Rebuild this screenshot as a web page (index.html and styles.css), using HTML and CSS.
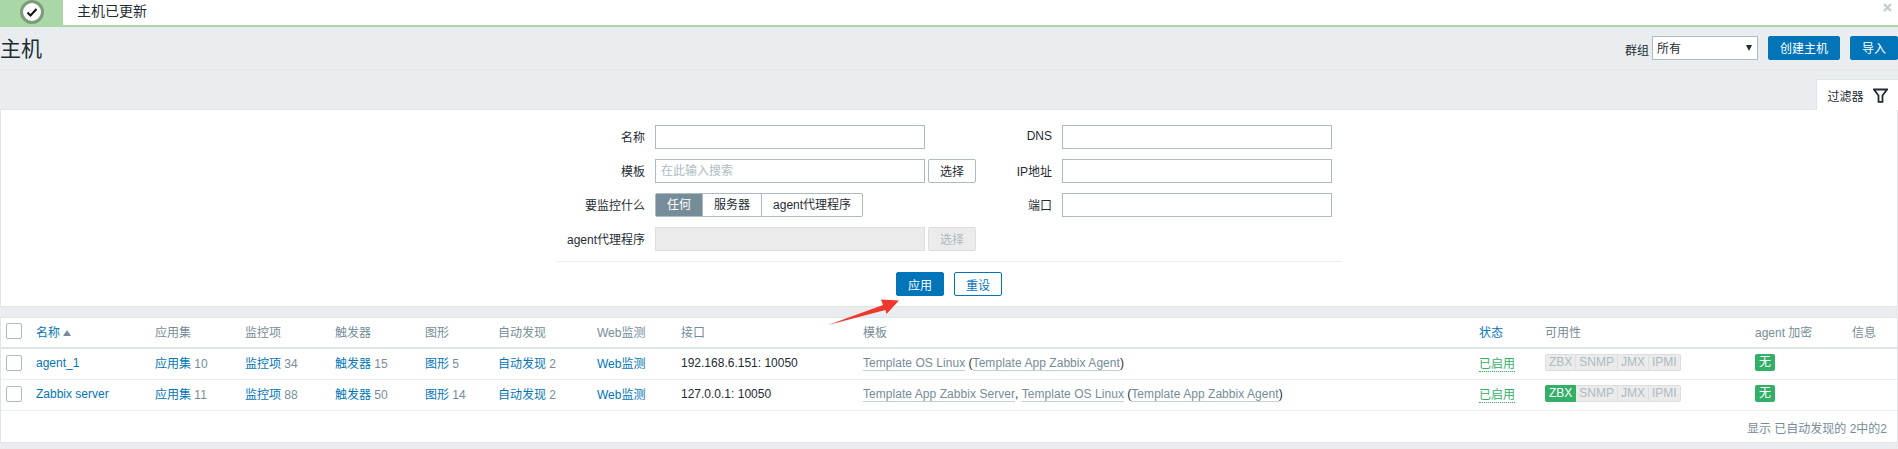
FILE: index.html
```html
<!DOCTYPE html>
<html>
<head>
    <title>主机</title>
    <link rel="stylesheet" href="styles.css">
</head>
<body>
    <div class="msg-good">
        <div class="msg-icon">
            <svg width="26" height="26" viewBox="0 0 26 26">
                <circle cx="13" cy="12" r="10.5" fill="#fff" stroke="#7c9a7c" stroke-width="3"/>
                <path d="M8.5 12.5l3 3 6-6.500" fill="none" stroke="#111" stroke-width="2"/>
            </svg>
        </div>
        <div class="msg-text">主机已更新</div>
        <svg class="msg-close" width="9" height="9" viewBox="0 0 9 9">
            <path d="M1 1l7 7M8 1l-7 7" stroke="#c3ccd1" stroke-width="2.4"/>
        </svg>
    </div>

    <div class="header">
        <h1>主机</h1>
        <div class="controls">
            <label class="group-label">群组</label>
            <div class="fake-select">所有<span class="select-arrow"></span></div>
            <button class="btn btn-create">创建主机</button>
            <button class="btn btn-import">导入</button>
        </div>
    </div>

    <div class="filter-tabs">
        <div class="filter-tab">
            过滤器
            <svg width="15" height="15" viewBox="0 0 15 15">
                <path d="M1 1.5h13L9.500 7.500v6.300H5.500V7.500z" fill="none" stroke="#1f2c33" stroke-width="1.800"/>
            </svg>
        </div>
    </div>

    <div class="filter-panel">
        <div class="filter-form">
            <div class="filter-col">
                <div class="form-row">
                    <label>名称</label>
                    <input class="text-input" type="text">
                </div>
                <div class="form-row">
                    <label>模板</label>
                    <input class="text-input" type="text" placeholder="在此输入搜索">
                    <button class="btn-select">选择</button>
                </div>
                <div class="form-row">
                    <label>要监控什么</label>
                    <div class="radio-group">
                        <span class="radio radio-on">任何</span>
                        <span class="radio">服务器</span>
                        <span class="radio">agent代理程序</span>
                    </div>
                </div>
                <div class="form-row">
                    <label>agent代理程序</label>
                    <input class="text-input" type="text" disabled>
                    <button class="btn-select" disabled>选择</button>
                </div>
            </div>
            <div class="filter-col filter-col-right">
                <div class="form-row">
                    <label>DNS</label>
                    <input class="text-input" type="text">
                </div>
                <div class="form-row">
                    <label>IP地址</label>
                    <input class="text-input" type="text">
                </div>
                <div class="form-row">
                    <label>端口</label>
                    <input class="text-input" type="text">
                </div>
            </div>
        </div>
        <div class="filter-actions">
            <button class="btn btn-apply">应用</button>
            <button class="btn btn-alt">重设</button>
        </div>
    </div>

    <div class="list-panel">
        <table class="list-table">
            <colgroup>
                <col class="c-check"><col class="c-name"><col class="c-apps"><col class="c-items"><col class="c-trig">
                <col class="c-graph"><col class="c-disc"><col class="c-web"><col class="c-iface"><col class="c-tmpl">
                <col class="c-status"><col class="c-avail"><col class="c-enc"><col class="c-info">
            </colgroup>
            <thead>
                <tr>
                    <th><span class="checkbox"></span></th>
                    <th><a href="#">名称</a><span class="sort-up"></span></th>
                    <th>应用集</th>
                    <th>监控项</th>
                    <th>触发器</th>
                    <th>图形</th>
                    <th>自动发现</th>
                    <th>Web监测</th>
                    <th>接口</th>
                    <th>模板</th>
                    <th><a href="#">状态</a></th>
                    <th>可用性</th>
                    <th>agent 加密</th>
                    <th>信息</th>
                </tr>
            </thead>
            <tbody>
                <tr>
                    <td><span class="checkbox"></span></td>
                    <td><a href="#">agent_1</a></td>
                    <td><a href="#">应用集</a> <span class="count">10</span></td>
                    <td><a href="#">监控项</a> <span class="count">34</span></td>
                    <td><a href="#">触发器</a> <span class="count">15</span></td>
                    <td><a href="#">图形</a> <span class="count">5</span></td>
                    <td><a href="#">自动发现</a> <span class="count">2</span></td>
                    <td><a href="#">Web监测</a></td>
                    <td>192.168.6.151: 10050</td>
                    <td><a class="tmpl" href="#">Template OS Linux</a> (<a class="tmpl" href="#">Template App Zabbix Agent</a>)</td>
                    <td><a class="enabled" href="#">已启用</a></td>
                    <td>
                        <div class="avail">
                            <span>ZBX</span><span>SNMP</span><span>JMX</span><span>IPMI</span>
                        </div>
                    </td>
                    <td><span class="enc">无</span></td>
                    <td></td>
                </tr>
                <tr>
                    <td><span class="checkbox"></span></td>
                    <td><a href="#">Zabbix server</a></td>
                    <td><a href="#">应用集</a> <span class="count">11</span></td>
                    <td><a href="#">监控项</a> <span class="count">88</span></td>
                    <td><a href="#">触发器</a> <span class="count">50</span></td>
                    <td><a href="#">图形</a> <span class="count">14</span></td>
                    <td><a href="#">自动发现</a> <span class="count">2</span></td>
                    <td><a href="#">Web监测</a></td>
                    <td>127.0.0.1: 10050</td>
                    <td><a class="tmpl" href="#">Template App Zabbix Server</a>, <a class="tmpl" href="#">Template OS Linux</a> (<a class="tmpl" href="#">Template App Zabbix Agent</a>)</td>
                    <td><a class="enabled" href="#">已启用</a></td>
                    <td>
                        <div class="avail">
                            <span class="avail-on">ZBX</span><span>SNMP</span><span>JMX</span><span>IPMI</span>
                        </div>
                    </td>
                    <td><span class="enc">无</span></td>
                    <td></td>
                </tr>
            </tbody>
        </table>
        <div class="list-footer">显示 已自动发现的 2中的2</div>
    </div>

    <svg class="red-arrow" width="80" height="32" viewBox="0 0 80 32">
        <path d="M1 28L56 8L54 2.500L72 3.500L59.500 17L58.500 13z" fill="#f0372b"/>
    </svg>
</body>
</html>
```

FILE: styles.css
```css
* { box-sizing: border-box; }
html, body { margin: 0; padding: 0; }
body { position: relative; height: 449px; overflow: hidden; background-color: #e9edf0; color: #1f2c33; font-family: "Liberation Sans", "Noto Sans CJK SC", sans-serif; font-size: 12px; }
a { color: #0275b8; text-decoration: none; }
button { font-family: inherit; font-size: 12px; }

.msg-good { position: relative; display: flex; height: 27px; background-color: #fff; border-bottom: 2px solid #a9d7a5; }
.msg-icon { display: flex; justify-content: center; width: 63px; background-color: #a9d7a5; }
.msg-text { padding-left: 14px; line-height: 23px; font-size: 14px; }
.msg-close { position: absolute; top: 3px; right: 6px; }

.header { display: flex; justify-content: space-between; align-items: center; height: 43px; padding-bottom: 1px; border-bottom: 1px solid #dfe4e7; }
.header h1 { margin: 2px 0 0; font-size: 21px; font-weight: normal; line-height: 24px; }
.controls { display: flex; align-items: center; }
.group-label { margin-top: 3px; margin-right: 3px; }
.fake-select { position: relative; width: 106px; height: 24px; margin-right: 10px; padding-left: 4px; line-height: 24px; background-color: #fff; border: 1px solid #acbbc2; }
.select-arrow { position: absolute; top: 8px; right: 5px; border-left: 3px solid transparent; border-right: 3px solid transparent; border-top: 6px solid #1f2c33; }

.btn { height: 24px; padding: 0; border: 1px solid #0275b8; border-radius: 2px; background-color: #0275b8; color: #fff; }
.btn-create { width: 72px; margin-right: 10px; }
.btn-import { width: 48px; }
.btn-apply { width: 48px; }
.btn-alt { width: 48px; background-color: #fff; color: #0275b8; }

.filter-tabs { display: flex; justify-content: flex-end; height: 39px; padding-top: 9px; }
.filter-tab { display: flex; justify-content: center; align-items: center; gap: 9px; width: 82px; height: 31px; background-color: #fff; border-top: 1px solid #dfe4e7; border-left: 1px solid #dfe4e7; position: relative; z-index: 1; }

.filter-panel { height: 198px; padding-top: 15px; background-color: #fff; border: 1px solid #dfe4e7; }
.filter-form { display: flex; width: 786px; margin-left: 555px; height: 137px; border-bottom: 1px solid #ebeef0; }
.filter-col { width: 420px; }
.filter-col-right { width: 366px; }
.form-row { display: flex; align-items: center; height: 24px; margin-bottom: 10px; }
.form-row label { flex: none; width: 89px; margin-right: 10px; padding-bottom: 2px; text-align: right; }
.filter-col-right .form-row label { width: 76px; }
.text-input { width: 270px; height: 24px; padding: 0 5px; border: 1px solid #acbbc2; background-color: #fff; font-family: inherit; font-size: 12px; }
.text-input::placeholder { color: #acbbc2; }
.text-input:disabled { background-color: #ebebeb; border-color: #dcdfe0; }
.btn-select { width: 48px; height: 24px; margin-left: 3px; padding: 0 0 2px; border: 1px solid #acbbc2; border-radius: 2px; background-color: #fff; color: #1f2c33; }
.btn-select:disabled { background-color: #ebebeb; border-color: #dcdfe0; color: #acbbc2; }

.radio-group { display: flex; height: 24px; border: 1px solid #acbbc2; border-radius: 2px; }
.radio { padding: 0 11px; line-height: 22px; border-left: 1px solid #acbbc2; }
.radio:first-child { border-left: 0; }
.radio-on { background-color: #768d99; color: #fff; }

.filter-actions { display: flex; justify-content: center; gap: 10px; padding-top: 10px; }

.list-panel { height: 126px; margin-top: 10px; background-color: #fff; border: 1px solid #dfe4e7; }
.list-table { width: 100%; table-layout: fixed; border-collapse: collapse; }
.list-table th { height: 30px; padding: 0 0 3px 5px; text-align: left; font-weight: normal; color: #768d99; border-bottom: 2px solid #dfe4e7; }
.list-table td { height: 31px; padding: 0 0 2px 5px; border-bottom: 1px solid #ebeef0; }
.c-check { width: 30px; }
.c-name { width: 119px; }
.c-apps { width: 90px; }
.c-items { width: 90px; }
.c-trig { width: 90px; }
.c-graph { width: 73px; }
.c-disc { width: 99px; }
.c-web { width: 84px; }
.c-iface { width: 182px; }
.c-tmpl { width: 616px; }
.c-status { width: 66px; }
.c-avail { width: 210px; }
.c-enc { width: 97px; }

.checkbox { display: block; width: 16px; height: 16px; border: 1px solid #acbbc2; border-radius: 2px; background-color: #fff; }
.sort-up { display: inline-block; margin-left: 3px; vertical-align: 1px; border-left: 4px solid transparent; border-right: 4px solid transparent; border-bottom: 6px solid #768d99; }
.count { color: #768d99; }
.tmpl { color: #768d99; border-bottom: 1px solid #c5d0d5; letter-spacing: 0.05px; }
.enabled { color: #34af67; border-bottom: 1px dotted #34af67; }

.avail { display: flex; width: 136px; height: 17px; }
.avail span { padding: 0 3px; line-height: 15px; background-color: #ebebeb; color: #acbbc2; border: 1px solid #dcdfe0; border-left: 0; font-size: 12px; }
.avail span:first-child { border-left: 1px solid #dcdfe0; border-radius: 2px 0 0 2px; }
.avail span:last-child { border-radius: 0 2px 2px 0; }
.avail span.avail-on { background-color: #34af67; border-color: #34af67; color: #fff; }
.enc { display: block; width: 20px; height: 17px; line-height: 17px; text-align: center; background-color: #34af67; border-radius: 2px; color: #fff; }

.list-footer { padding: 8px 10px 0 0; text-align: right; color: #768d99; }

.red-arrow { position: absolute; left: 827px; top: 297px; }
```
